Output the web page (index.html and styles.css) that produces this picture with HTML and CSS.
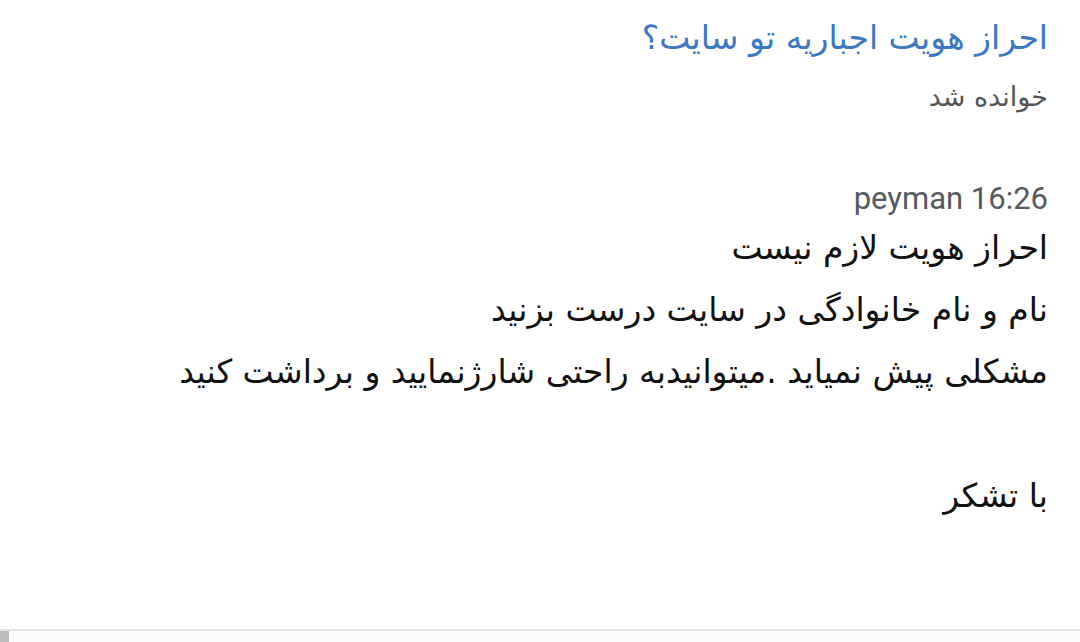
FILE: index.html
```html
<!DOCTYPE html>
<html lang="fa" dir="rtl">
<head>
<meta charset="utf-8">
<link rel="stylesheet" href="styles.css">
</head>
<body>
<div class="page">
  <main class="content">
    <h1 class="subject">احراز هویت اجباریه تو سایت؟</h1>
    <div class="status">خوانده شد</div>
    <div class="reply">
      <div class="meta" dir="ltr">peyman 16:26</div>
      <div class="body">
        <p class="line">احراز هویت لازم نیست</p>
        <p class="line">نام و نام خانوادگی در سایت درست بزنید</p>
        <p class="line">مشکلی پیش نمیاید .میتوانیدبه راحتی شارژنمایید و برداشت کنید</p>
        <p class="line empty">&nbsp;</p>
        <p class="line">با تشکر</p>
      </div>
    </div>
  </main>
  <footer class="bottom">
    <div class="thumb"></div>
    <div class="track"></div>
  </footer>
</div>
</body>
</html>
```

FILE: styles.css
```css
html, body {
  margin: 0;
  padding: 0;
  background: #ffffff;
}
body {
  font-family: "DejaVu Sans", "Noto Sans", sans-serif;
  width: 1080px;
  height: 642px;
  overflow: hidden;
}
.page {
  height: 642px;
  display: flex;
  flex-direction: column;
}
.content {
  flex: 1;
  padding: 14px 32px 0 32px;
}
.subject {
  margin: 0;
  font-weight: normal;
  font-size: 33px;
  line-height: 48px;
  color: #3b78c3;
}
.status {
  margin-top: 20px;
  font-size: 27px;
  line-height: 30px;
  color: #555555;
}
.reply {
  margin-top: 70px;
}
.meta {
  text-align: right;
  font-family: "Roboto", "Noto Sans", sans-serif;
  font-size: 31px;
  line-height: 34px;
  color: #555a60;
}
.body {
  padding-top: 1px;
  color: #111111;
}
.line {
  margin: 0;
  font-size: 33px;
  line-height: 62px;
}
.bottom {
  height: 11px;
  border-top: 2px solid #e2e2e2;
  display: flex;
  flex-direction: row-reverse;
  background: #fafafa;
}
.thumb {
  width: 9px;
  background: #bdbdbd;
}
.track {
  flex: 1;
}
```
